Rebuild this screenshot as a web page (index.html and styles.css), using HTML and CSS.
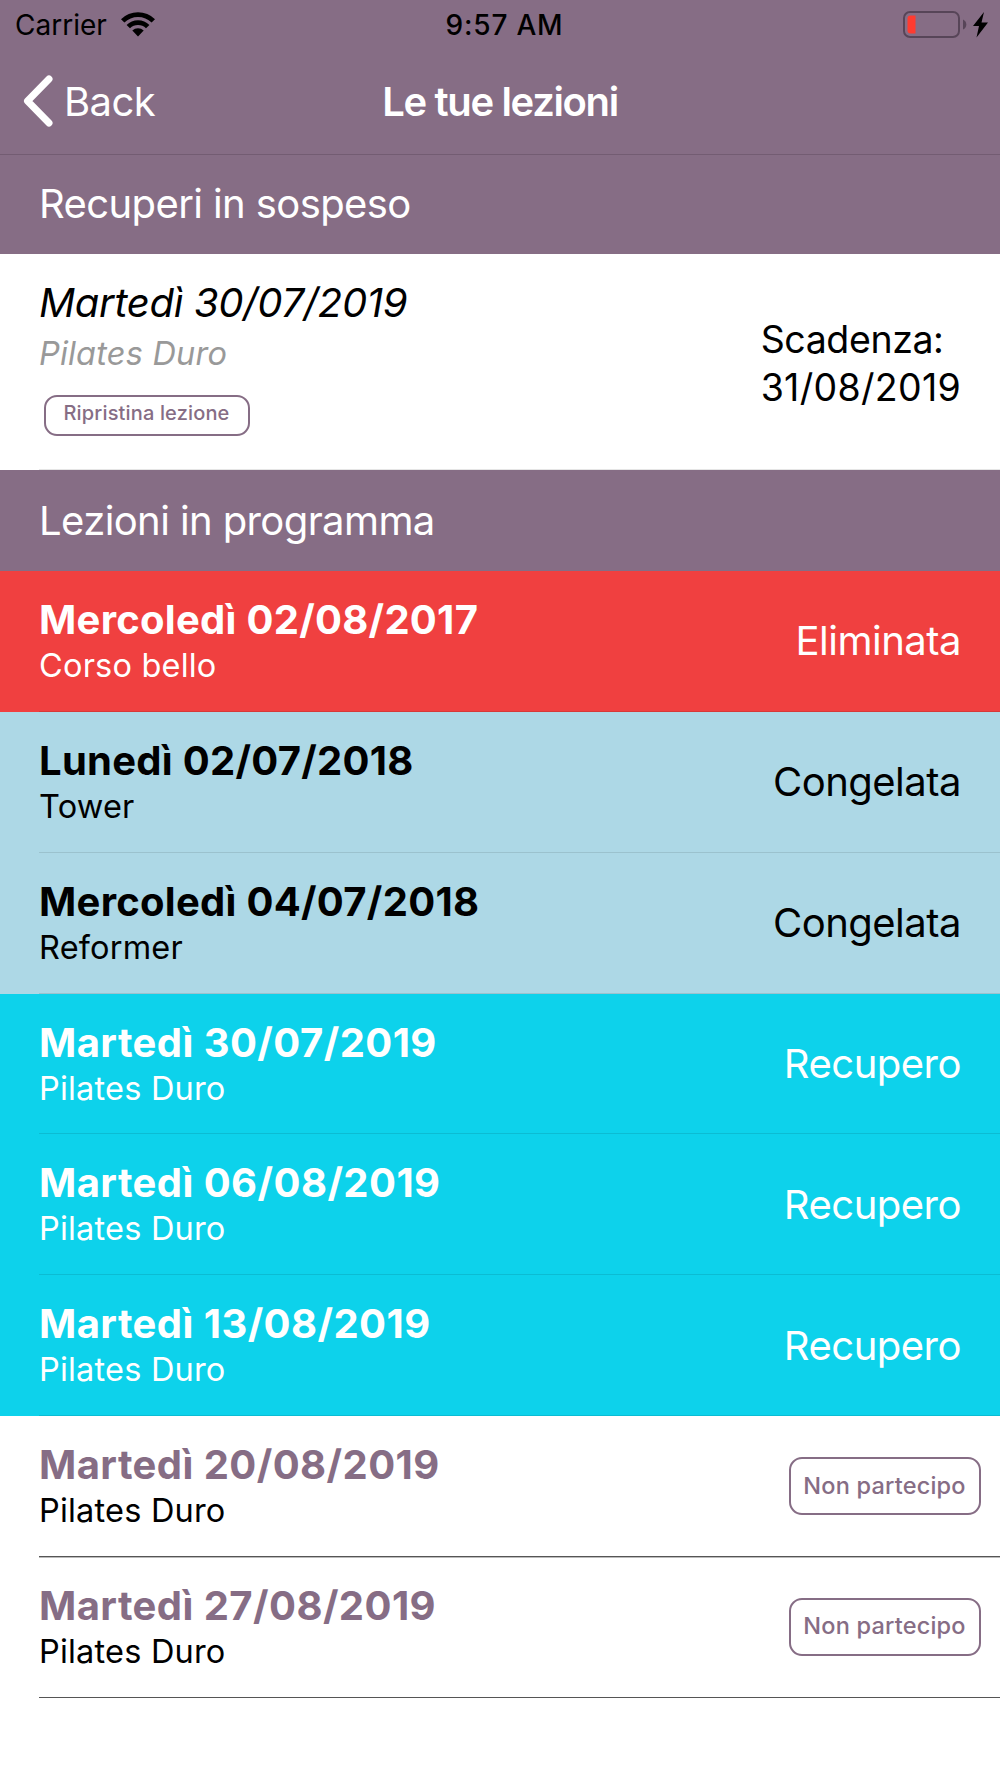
FILE: index.html
```html
<!DOCTYPE html>
<html lang="it">
<head>
    <meta charset="UTF-8">
    <meta name="viewport" content="width=device-width, initial-scale=1.0">
    <title>Le tue lezioni</title>
    <link rel="stylesheet" href="styles.css">
</head>
<body>
    <header class="topbar">
        <div class="status">
            <div class="carrier">
                <span class="carrier-name">Carrier</span>
                <svg class="wifi" width="34" height="25" viewBox="0 0 34 25">
                    <path d="M0 7.2A24 24 0 0 1 34 7.2L30.6 10.6A19.2 19.2 0 0 0 3.4 10.6Z"/>
                    <path d="M5.6 12.9A16.2 16.2 0 0 1 28.4 12.9L25 16.3A11.4 11.4 0 0 0 9 16.3Z"/>
                    <path d="M11.3 18.6A8.1 8.1 0 0 1 22.7 18.6L17 24.4Z"/>
                </svg>
            </div>
            <div class="clock">9:57 AM</div>
            <div class="battery">
                <svg width="86" height="28" viewBox="0 0 86 28">
                    <rect x="1" y="1" width="55" height="25" rx="6" fill="none" stroke="#574558" stroke-width="2"/>
                    <path d="M60 8.5Q63.3 10 63.3 13.5T60 18.5Z" fill="#574558"/>
                    <path d="M12.5 4.5V22.5H7.5Q4.500 22.5 4.500 19.5V7.5Q4.500 4.500 7.5 4.500Z" fill="#ff3b30"/>
                    <path d="M81 1L70 15H76L73.500 26.500L85 11.500H78.500Z" fill="#000"/>
                </svg>
            </div>
        </div>
        <nav class="navbar">
            <a class="back">
                <svg width="30" height="52" viewBox="0 0 30 52">
                    <path d="M26 4L4.500 26L26 48" fill="none" stroke="#fff" stroke-width="7" stroke-linecap="round" stroke-linejoin="round"/>
                </svg>
                <span class="back-label">Back</span>
            </a>
            <h1 class="title">Le tue lezioni</h1>
            <div class="nav-right"></div>
        </nav>
    </header>

    <h2 class="section first">Recuperi in sospeso</h2>
    <div class="row pending">
        <div class="cell">
            <div class="info">
                <div class="date">Martedì 30/07/2019</div>
                <div class="course">Pilates Duro</div>
                <button class="btn restore">Ripristina lezione</button>
            </div>
            <div class="deadline">Scadenza:<br><span class="deadline-date">31/08/2019</span></div>
        </div>
    </div>

    <h2 class="section">Lezioni in programma</h2>
    <div class="row deleted">
        <div class="cell">
            <div class="info">
                <div class="date">Mercoledì 02/08/2017</div>
                <div class="course">Corso bello</div>
            </div>
            <div class="state">Eliminata</div>
        </div>
    </div>
    <div class="row frozen">
        <div class="cell">
            <div class="info">
                <div class="date">Lunedì 02/07/2018</div>
                <div class="course">Tower</div>
            </div>
            <div class="state">Congelata</div>
        </div>
    </div>
    <div class="row frozen">
        <div class="cell">
            <div class="info">
                <div class="date">Mercoledì 04/07/2018</div>
                <div class="course">Reformer</div>
            </div>
            <div class="state">Congelata</div>
        </div>
    </div>
    <div class="row makeup">
        <div class="cell">
            <div class="info">
                <div class="date">Martedì 30/07/2019</div>
                <div class="course">Pilates Duro</div>
            </div>
            <div class="state">Recupero</div>
        </div>
    </div>
    <div class="row makeup">
        <div class="cell">
            <div class="info">
                <div class="date">Martedì 06/08/2019</div>
                <div class="course">Pilates Duro</div>
            </div>
            <div class="state">Recupero</div>
        </div>
    </div>
    <div class="row makeup">
        <div class="cell">
            <div class="info">
                <div class="date">Martedì 13/08/2019</div>
                <div class="course">Pilates Duro</div>
            </div>
            <div class="state">Recupero</div>
        </div>
    </div>
    <div class="row planned">
        <div class="cell">
            <div class="info">
                <div class="date">Martedì 20/08/2019</div>
                <div class="course">Pilates Duro</div>
            </div>
            <button class="btn skip">Non partecipo</button>
        </div>
    </div>
    <div class="row planned">
        <div class="cell">
            <div class="info">
                <div class="date">Martedì 27/08/2019</div>
                <div class="course">Pilates Duro</div>
            </div>
            <button class="btn skip">Non partecipo</button>
        </div>
    </div>
</body>
</html>
```

FILE: styles.css
```css
* {
    box-sizing: border-box;
}
body {
    margin: 0;
    background: #fff;
    color: #000;
    font-family: Inter, "Liberation Sans", sans-serif;
    font-size: 40px;
    white-space: nowrap;
}
h1, h2 {
    margin: 0;
    font-size: 40px;
}

/* status bar + navigation bar */
.topbar {
    height: 155px;
    background: #866d85;
    border-bottom: 1px solid #735c72;
}
.status {
    display: grid;
    grid-template-columns: 1fr auto 1fr;
    height: 50px;
    padding: 0 11px 0 15px;
    font-size: 28px;
    line-height: 51px;
}
.carrier {
    display: flex;
    align-items: flex-start;
    gap: 14px;
}
.wifi {
    margin-top: 12px;
}
.clock {
    padding-left: 5px;
    font-weight: 500;
    letter-spacing: 0.8px;
}
.battery {
    display: flex;
    justify-content: flex-end;
    padding-top: 11px;
}
.navbar {
    display: grid;
    grid-template-columns: 1fr auto 1fr;
    align-items: start;
    height: 104px;
    padding: 0 23px;
    color: #fff;
    line-height: 103px;
}
.back {
    display: flex;
    gap: 11px;
    letter-spacing: -0.6px;
}
.back svg {
    margin-top: 25px;
}
.title {
    font-weight: 600;
    letter-spacing: -1.35px;
}

/* section headers */
.section {
    height: 101.5px;
    padding-left: 39px;
    background: #866d85;
    color: #fff;
    font-weight: 400;
    letter-spacing: -0.6px;
    line-height: 102px;
}
.section.first {
    height: 98.5px;
    line-height: 98px;
}

/* lesson rows */
.row {
    height: 140.87px;
    padding-left: 39px;
}
.cell {
    display: flex;
    justify-content: space-between;
    align-items: center;
    height: 100%;
    padding-right: 39px;
    border-bottom: 1px solid rgba(0, 0, 0, 0.1);
}
.info {
    align-self: flex-start;
    padding-top: 25px;
}
.date {
    font-weight: 700;
    letter-spacing: 0.28px;
    line-height: 48px;
}
.course {
    font-size: 32.5px;
    letter-spacing: 0.2px;
    line-height: 44.5px;
}
.state {
    letter-spacing: -0.5px;
}
.deleted {
    background: #f04040;
    color: #fff;
}
.frozen {
    background: #add8e6;
}
.makeup {
    background: #0dd2eb;
    color: #fff;
}
.makeup .date,
.planned .date {
    letter-spacing: 0.44px;
}
.planned .date {
    color: #866d85;
}
.planned .cell {
    padding-right: 19px;
    border-bottom-color: #555;
    box-shadow: 0 1px 0 #bbb;
}

.pending {
    height: 216px;
}
.pending .info {
    padding-top: 25px;
}
.pending .date {
    font-style: italic;
    font-weight: 400;
    letter-spacing: -0.33px;
}
.pending .course {
    color: #999;
    font-style: italic;
    line-height: 54.4px;
}
.deadline {
    padding-top: 5px;
    font-size: 37.5px;
    letter-spacing: -0.4px;
    line-height: 48px;
}
.deadline-date {
    letter-spacing: 0.3px;
}

.btn {
    display: block;
    border: 2px solid #866d85;
    border-radius: 13px;
    background: none;
    color: #866d85;
    font-family: inherit;
    font-weight: 500;
}
.restore {
    width: 206px;
    height: 41px;
    margin: 14px 0 0 5px;
    padding: 0 1px 4px 0;
    font-size: 20px;
    letter-spacing: 0.15px;
}
.skip {
    width: 192px;
    height: 58px;
    padding: 0 1px 2px 0;
    font-size: 23.5px;
    letter-spacing: 0.2px;
}
```
